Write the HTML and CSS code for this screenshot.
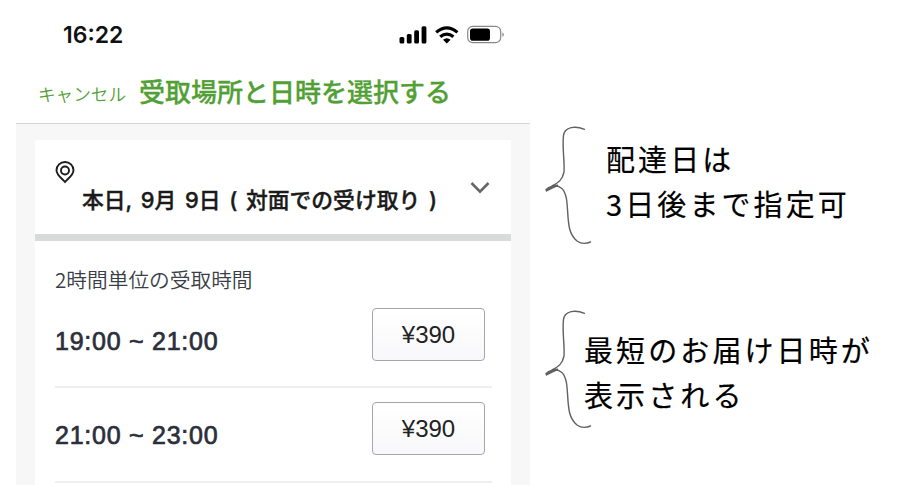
FILE: index.html
```html
<!DOCTYPE html>
<html lang="ja">
<head>
    <meta charset="UTF-8">
    <title>受取場所と日時を選択する</title>
    <link rel="stylesheet" href="styles.css">
</head>
<body>
    <div class="phone">
        <div class="status-bar">
            <span class="clock">16:22</span>
            <svg class="status-icons" width="108" height="24" viewBox="0 0 108 24">
                <rect x="1.5" y="15" width="4.8" height="6.5" rx="1.5"/>
                <rect x="8.8" y="12" width="4.8" height="9.5" rx="1.5"/>
                <rect x="16.2" y="8.2" width="4.8" height="13.3" rx="1.5"/>
                <rect x="23.6" y="4.3" width="4.8" height="17.2" rx="1.5"/>
                <path class="wave" d="M38.2 10.4Q48.8 1.4 59.4 10.4M42.2 14.8Q48.8 9.3 55.4 14.8"/>
                <path d="M45 17.8Q48.8 14.6 52.6 17.8L48.8 21.4Z"/>
                <rect class="battery" x="69.7" y="4.4" width="33" height="16.2" rx="5"/>
                <rect x="72" y="6.5" width="20" height="12.2" rx="2.8"/>
                <path class="battery-tip" d="M104.4 10.2Q107.4 12.5 104.4 14.8Z"/>
            </svg>
        </div>
        <div class="header">
            <a class="cancel">キャンセル</a>
            <h1 class="title">受取場所と日時を選択する</h1>
        </div>
        <div class="content">
            <div class="date-card">
                <svg class="pin" width="20" height="24" viewBox="0 0 20 24">
                    <path d="M10 22C7.5 18.9 1.5 15.2 1.5 10.2A8.5 8.2 0 0 1 18.5 10.2C18.5 15.2 12.5 18.9 10 22Z"/>
                    <circle cx="10" cy="10.5" r="4"/>
                </svg>
                <span class="date">本日, 9月 9日 ( 対面での受け取り )</span>
                <svg class="chevron" width="20" height="14" viewBox="0 0 20 14">
                    <path d="M1.5 2L10 10.7L18.5 2"/>
                </svg>
            </div>
            <div class="slots">
                <h2 class="slots-title">2時間単位の受取時間</h2>
                <div class="slot">
                    <span class="time">19:00 ~ 21:00</span>
                    <button class="price">¥390</button>
                </div>
                <div class="slot">
                    <span class="time">21:00 ~ 23:00</span>
                    <button class="price">¥390</button>
                </div>
            </div>
        </div>
    </div>
    <div class="notes">
        <div class="note">
            <svg class="brace" width="48" height="122" viewBox="0 0 48 122">
                <path d="M39.5 4.3C31 .8 19.5 1 18.4 11C17.2 24 19.8 36 19 47C17.5 55 13 58 7 61C17 60 20 66 21.5 74C24 91 21 107 32 116C37 119.5 42 118.5 45.5 117"/>
                <path class="nib" d="M1 64.5Q6 60.5 13 60.3Q8 62.5 1.5 66Z"/>
            </svg>
            <p>配達日は<br>3日後まで指定可</p>
        </div>
        <div class="note note-wide">
            <svg class="brace" width="48" height="122" viewBox="0 0 48 122">
                <path d="M39.5 4.3C31 .8 19.5 1 18.4 11C17.2 24 19.8 36 19 47C17.5 55 13 58 7 61C17 60 20 66 21.5 74C24 91 21 107 32 116C37 119.5 42 118.5 45.5 117"/>
                <path class="nib" d="M1 64.5Q6 60.5 13 60.3Q8 62.5 1.5 66Z"/>
            </svg>
            <p>最短のお届け日時が<br>表示される</p>
        </div>
    </div>
</body>
</html>
```
FILE: styles.css
```css
* { box-sizing: border-box; }
body { margin: 0; height: 500px; overflow: hidden; display: flex; align-items: flex-start; background-color: #fff; font-family: "Noto Sans CJK JP", sans-serif; }
h1, h2, p { margin: 0; }
svg { display: block; flex: none; }

.phone { width: 514px; height: 485px; margin-left: 16px; overflow: hidden; flex: none; }
.status-bar { height: 70px; padding: 22px 24px 0 47px; display: flex; justify-content: space-between; align-items: flex-start; }
.clock { font-family: Inter, sans-serif; font-size: 23px; line-height: 26px; font-weight: 600; color: #111; }
.status-icons .wave { fill: none; stroke: #000; stroke-width: 3.2; }
.status-icons .battery { fill: none; stroke: #888; stroke-width: 1.2; }
.status-icons .battery-tip { fill: #888; }

.header { height: 54px; padding-left: 22px; display: flex; align-items: flex-start; border-bottom: 1px solid #d6d6d6; color: #529f35; white-space: nowrap; }
.cancel { width: 101px; padding-top: 11px; font-size: 17.6px; line-height: 26px; font-weight: 350; }
.title { font-size: 26px; line-height: 41px; font-weight: 500; -webkit-text-stroke: .3px #529f35; }

.content { height: 361px; padding: 16px 19px 0; background-color: #f7f7f7; }
.date-card { height: 101px; padding: 20px 21px 0 20px; display: flex; align-items: flex-start; background-color: #fff; border-bottom: 7px solid #d9dbda; }
.pin path, .pin circle { fill: none; stroke: #1c1c1c; stroke-width: 1.9; }
.date { flex: 1; padding: 25px 0 0 7px; font-family: Inter, "Noto Sans CJK JP", sans-serif; font-size: 21.8px; line-height: 30px; font-weight: 500; -webkit-text-stroke: .4px #1a1a1a; word-spacing: 2.9px; color: #1a1a1a; white-space: nowrap; }
.chevron { margin-top: 21px; }
.chevron path { fill: none; stroke: #666; stroke-width: 2.6; }

.slots { height: 260px; padding: 23px 19px 0 20px; background-color: #fff; }
.slots-title { font-size: 20.7px; line-height: 30px; font-weight: 350; color: #3a3f47; white-space: nowrap; }
.slot { height: 95px; padding-top: 15px; display: flex; justify-content: space-between; align-items: flex-start; border-bottom: 2px solid #efeff0; }
.slot:first-of-type { height: 94px; }
.time { padding-top: 14px; font-family: "Liberation Sans", sans-serif; font-size: 25px; line-height: 36px; letter-spacing: .75px; -webkit-text-stroke: .7px #2b2f3b; color: #2b2f3b; }
.price { width: 113px; height: 53px; margin: -1px 7px 0 0; padding: 0; border: 1.5px solid #a5a6ac; border-radius: 4px; background: linear-gradient(#fff, #f8f8fa); font-family: "Liberation Sans", sans-serif; font-size: 24px; color: #222; }

.notes { padding: 125px 0 0 15px; display: flex; flex-direction: column; gap: 62px; }
.note { height: 122px; display: flex; color: #000; }
.note p { padding: 11px 0 0 13px; font-size: 29px; line-height: 45px; letter-spacing: 3.1px; font-weight: 400; -webkit-text-stroke: .2px #000; white-space: nowrap; }
.note-wide p { margin-left: -22px; padding-top: 18px; }
.brace path { fill: none; stroke: #606060; stroke-width: 1.4; stroke-linecap: round; }
.brace .nib { fill: #606060; }
```
